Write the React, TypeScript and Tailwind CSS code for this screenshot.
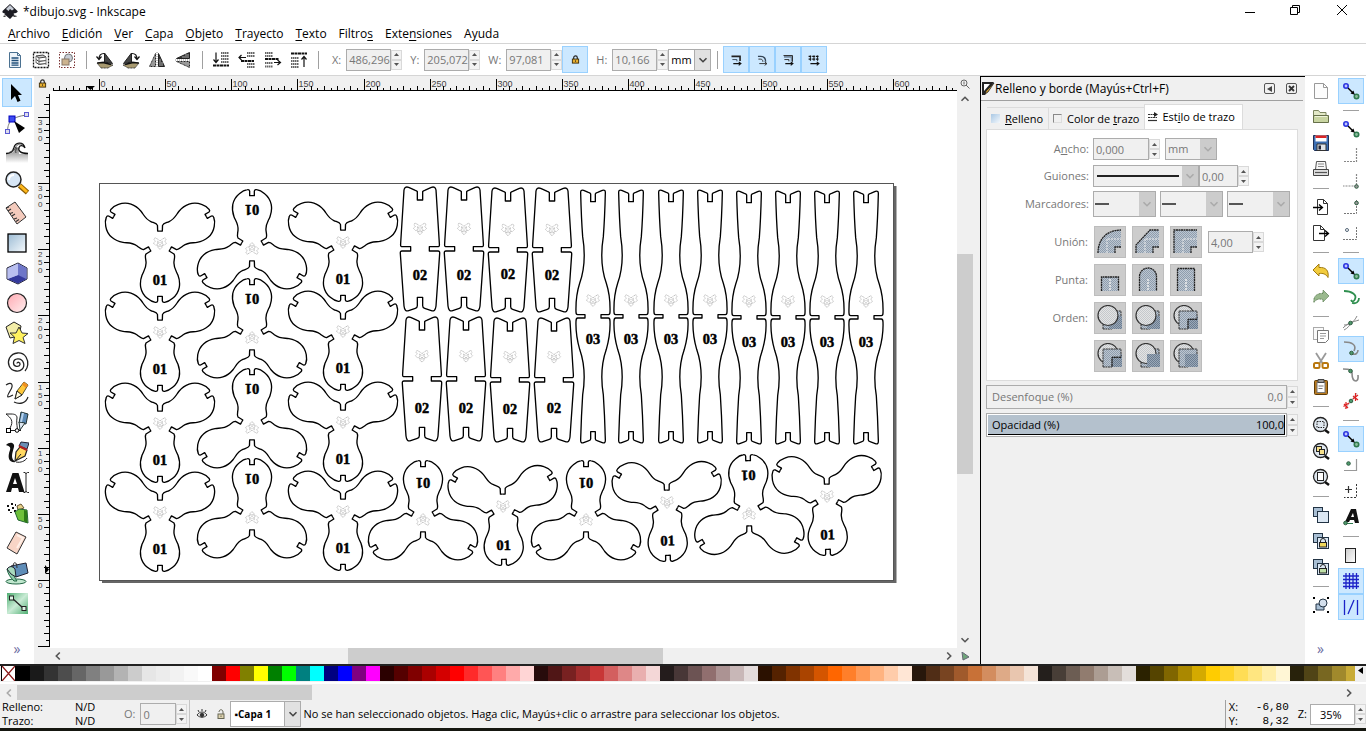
import { type ReactNode } from 'react';

type Glyph = () => ReactNode;

interface IconItem {
  label: string;
  icon: Glyph;
  active?: boolean;
}

const SEP = 'sep' as const;

function Svg({ size = 20, children }: { size?: number; children: ReactNode }) {
  return (
    <svg width={size} height={size} viewBox="0 0 20 20" fill="none" className="block shrink-0" aria-hidden="true">
      {children}
    </svg>
  );
}

/* ---------- shared glyphs ---------- */

const Up = () => (
  <svg width="5" height="3" viewBox="0 0 5 3"><path d="M2.5 0L5 3H0z" fill="currentColor" /></svg>
);
const Down = () => (
  <svg width="5" height="3" viewBox="0 0 5 3"><path d="M2.5 3L5 0H0z" fill="currentColor" /></svg>
);
const Chevron = ({ rotate = 0 }: { rotate?: number }) => (
  <svg width="10" height="10" viewBox="0 0 10 10" fill="none">
    <path d="M1.5 3.2L5 6.7 8.500 3.2" stroke="currentColor" strokeWidth="1.6" transform={`rotate(${rotate} 5 5)`} />
  </svg>
);
const Padlock = ({ size = 9 }: { size?: number }) => (
  <svg width={size} height={size} viewBox="0 0 10 10" fill="none">
    <path d="M3 5V3a2 2 0 0 1 4 0v2" stroke="#222" strokeWidth="1.3" />
    <rect x="1.500" y="4.500" width="7" height="4.500" fill="#e8b030" stroke="#3a2a08" />
    <path d="M5 6v1.500" stroke="#222" />
  </svg>
);

/* ---------- selector toolbar ---------- */

const SelectAll: Glyph = () => (
  <Svg>
    <path d="M4.500 2.500h8l3 3v12h-11z" fill="#eef4fa" stroke="#4b7191" />
    <path d="M12.500 2.500v3h3" stroke="#4b7191" />
    <path d="M6.500 8h7M6.500 10.500h7M6.500 13h7M6.500 15.200h7" stroke="#1f4e79" strokeWidth="1.3" />
  </Svg>
);
const SelectLayers: Glyph = () => (
  <Svg>
    <rect x="2.500" y="2.500" width="15" height="15" stroke="#111" strokeWidth="1.300" strokeDasharray="2 1" />
    <path d="M5 6l7-1 3 2-7 1zM5 9.500l3 2 7-1M5 12.500l3 2 7-1" stroke="#444" fill="#ccc" />
    <path d="M15 7v8M8 8v7M5 6v7" stroke="#777" />
  </Svg>
);
const Deselect: Glyph = () => (
  <Svg>
    <rect x="2.500" y="2.500" width="15" height="15" stroke="#7a3030" strokeDasharray="1.500 1.500" />
    <circle cx="11.500" cy="8" r="4" fill="#c9ced6" stroke="#777" />
    <rect x="5" y="9" width="7" height="6" fill="#cdb48f" stroke="#876" />
  </Svg>
);
const rotateArt = (
  <>
    <path d="M2 13l6-1 10 3-5 3H6z" fill="#a89a70" stroke="#333" strokeDasharray="1 .5" />
    <path d="M9.500 3v9l8 1.500z" fill="#444" stroke="#222" />
    <path d="M2.500 13l5.500-.500 8 2" stroke="#111" strokeWidth="1.300" />
    <path d="M4 9c0-4 2-5.500 5-5.500M1.500 6.500L4 9.500l2.500-3" stroke="#111" strokeWidth="1.200" />
  </>
);
const RotateLeft: Glyph = () => <Svg>{rotateArt}</Svg>;
const RotateRight: Glyph = () => <Svg><g transform="translate(20 0) scale(-1 1)">{rotateArt}</g></Svg>;
const flipArt = (
  <>
    <path d="M8.500 3.500v13h-6z" fill="#999" stroke="#222" strokeDasharray="1 .5" />
    <path d="M11.500 3.500v13h6z" fill="#333" stroke="#222" />
    <path d="M13 9v7M15 12v4" stroke="#aaa" />
    <path d="M10 2v16" stroke="#888" strokeDasharray="1 1" />
  </>
);
const FlipH: Glyph = () => <Svg>{flipArt}</Svg>;
const FlipV: Glyph = () => <Svg><g transform="rotate(-90 10 10)">{flipArt}</g></Svg>;

const LowerBottom: Glyph = () => (
  <Svg>
    <path d="M10 3h8M10 6h8M10 9h8M10 12h8" stroke="#666" strokeWidth="1.800" strokeDasharray="1.500 .5" />
    <path d="M2 15.500h16" stroke="#111" strokeWidth="2" strokeDasharray="3 .5" />
    <path d="M5 2.500V12M2.500 9.500L5 12.500l2.500-3" stroke="#111" strokeWidth="1.200" />
  </Svg>
);
const Lower: Glyph = () => (
  <Svg>
    <path d="M10 3h8M10 6h8M10 14h8M10 17h8" stroke="#666" strokeWidth="1.800" strokeDasharray="1.500 .5" />
    <path d="M4 11h13" stroke="#111" strokeWidth="2" strokeDasharray="3 .5" />
    <path d="M2 7.500h7M4.500 5L2 7.500 4.500 10" stroke="#111" strokeWidth="1.200" />
  </Svg>
);
const Raise: Glyph = () => (
  <Svg>
    <path d="M2 3h8M2 6h8M2 13h8M2 16.500h8" stroke="#666" strokeWidth="1.800" strokeDasharray="1.500 .5" />
    <path d="M2 9h14" stroke="#111" strokeWidth="2" strokeDasharray="3 .5" />
    <path d="M11 12.500h6M14.500 10L17.500 12.500 14.500 15" stroke="#111" strokeWidth="1.200" />
  </Svg>
);
const RaiseTop: Glyph = () => (
  <Svg>
    <path d="M2 8h8M2 11h8M2 14h8M2 17h8" stroke="#666" strokeWidth="1.800" strokeDasharray="1.500 .5" />
    <path d="M2 3.500h16" stroke="#111" strokeWidth="2" strokeDasharray="3 .5" />
    <path d="M15 17V7M12.500 9.500L15 6.500l2.500 3" stroke="#111" strokeWidth="1.200" />
  </Svg>
);

const ScaleStroke: Glyph = () => (
  <Svg size={18}>
    <path d="M5 6h9.500v5" stroke="#222" strokeWidth="1.800" />
    <path d="M6 9.500h5v2" stroke="#345" />
    <path d="M7 14h8M13 12l2.500 2-2.500 2" stroke="#111" strokeWidth="1.200" />
  </Svg>
);
const ScaleCorners: Glyph = () => (
  <Svg size={18}>
    <path d="M5.500 6h3c4 0 5.500 2 5.500 6" stroke="#345" strokeWidth="1.500" />
    <path d="M6 9h2c2 0 3 1 3 3M7 14h8M13 12l2.500 2-2.500 2" stroke="#222" />
  </Svg>
);
const MoveGradients: Glyph = () => (
  <Svg size={18}>
    <path d="M5.500 6.500h8.500v5" stroke="#7389a0" strokeWidth="2" />
    <path d="M5 5h10v7M6 9.500h5v2" stroke="#222" />
    <path d="M7 14h8M13 12l2.500 2-2.500 2" stroke="#111" strokeWidth="1.200" />
  </Svg>
);
const MovePatterns: Glyph = () => (
  <Svg size={18}>
    <path d="M4 6h12M4 9h12" stroke="#111" strokeWidth="1.500" strokeDasharray="3 1" />
    <path d="M6 5v6M10 5v6M14 5v6" stroke="#111" />
    <path d="M6 14h9M13 12l2.500 2-2.500 2" stroke="#111" strokeWidth="1.200" />
  </Svg>
);

const selectorTools: (IconItem | typeof SEP)[] = [
  { label: 'Seleccionar todo', icon: SelectAll },
  { label: 'Seleccionar todo en todas las capas', icon: SelectLayers },
  { label: 'Deseleccionar', icon: Deselect },
  SEP,
  { label: 'Rotar a la izquierda', icon: RotateLeft },
  { label: 'Rotar a la derecha', icon: RotateRight },
  { label: 'Reflejo horizontal', icon: FlipH },
  { label: 'Reflejo vertical', icon: FlipV },
  SEP,
  { label: 'Bajar al fondo', icon: LowerBottom },
  { label: 'Bajar', icon: Lower },
  { label: 'Elevar', icon: Raise },
  { label: 'Traer al frente', icon: RaiseTop },
  SEP,
];

const affectTools: IconItem[] = [
  { label: 'Escalar ancho de trazo', icon: ScaleStroke },
  { label: 'Escalar esquinas', icon: ScaleCorners },
  { label: 'Mover degradados', icon: MoveGradients },
  { label: 'Mover patrones', icon: MovePatterns },
];

/* ---------- toolbox (24px art) ---------- */

function Tool({ children }: { children: ReactNode }) {
  return (
    <svg width="24" height="24" viewBox="0 0 24 24" fill="none" className="block" aria-hidden="true">
      <defs>
        <linearGradient id="blue" x1="0" y1="0" x2="1" y2="1">
          <stop stopColor="#9cbbd4" /><stop offset="1" stopColor="#f6fafd" />
        </linearGradient>
        <linearGradient id="pink" x1="0" y1="0" x2="1" y2="1">
          <stop stopColor="#ffa9b2" /><stop offset="1" stopColor="#fff0f0" />
        </linearGradient>
        <linearGradient id="fade" x1="0" y1="0" x2="0" y2="1">
          <stop stopColor="#777" /><stop offset="1" stopColor="#fff" />
        </linearGradient>
        <linearGradient id="green" x1="0" y1="0" x2="1" y2="1">
          <stop stopColor="#4fae72" /><stop offset=".5" stopColor="#c9ebd5" /><stop offset="1" stopColor="#4fae72" />
        </linearGradient>
      </defs>
      {children}
    </svg>
  );
}

const toolbox: IconItem[] = [
  { label: 'Seleccionar', active: true, icon: () => <Tool><path d="M6 3v16l4-4 2.500 6 3-1.300-2.500-5.700H17z" fill="#000" /></Tool> },
  {
    label: 'Nodos',
    icon: () => (
      <Tool>
        <path d="M2.500 20C3 12 5 6 22 4" stroke="#777" />
        <rect x="4" y="5" width="6" height="6" fill="#3c4cf0" stroke="#0000c0" />
        <rect x="19.500" y="1.500" width="4" height="4" fill="#dde" stroke="#5a5ad0" />
        <rect x=".5" y="18.500" width="4" height="4" fill="#dde" stroke="#5a5ad0" />
        <path d="M9 10l11 7-6 5z" fill="#000" />
      </Tool>
    ),
  },
  {
    label: 'Retocar',
    icon: () => (
      <Tool>
        <path d="M1 13c6 0 8-2 9-6 2-2 4-1 4 6h9v9H1z" fill="url(#fade)" />
        <path d="M1 12.500c5 0 7-2 8-6 1-5 9-7 11 .5-2-3-5-3-6-.500-1 3 1 6 9 6" stroke="#111" strokeWidth="1.300" />
        <path d="M4 11.500c4-1 6-3 7-6 2-3 5-3 7-1.500M11 12c-1-2 0-4 1-5" stroke="#444" />
      </Tool>
    ),
  },
  {
    label: 'Zoom',
    icon: () => (
      <Tool>
        <path d="M14.500 14.500l8 7" stroke="#8b5c00" strokeWidth="5" />
        <path d="M15 14.500l7 6.500" stroke="#ffb81c" strokeWidth="3" />
        <circle cx="8.500" cy="8.500" r="7.500" fill="#d7e6f5" stroke="#222" strokeWidth="1.500" />
        <path d="M4 9c0-3 2-5 5-5" stroke="#fff" strokeWidth="2" />
      </Tool>
    ),
  },
  {
    label: 'Medir',
    icon: () => (
      <Tool>
        <path d="M1 7l9-6 11 15-9 7z" fill="#f4cbbd" stroke="#333" />
        <path d="M1 7l3-1M3 10l3-2M5 12.500l3-1M7 15l3-2M9 18l3-1M11 20.500l3-2" stroke="#333" strokeWidth="1.200" />
      </Tool>
    ),
  },
  { label: 'Rectángulo', icon: () => <Tool><rect x="3" y="3" width="18" height="18" fill="url(#blue)" stroke="#000" strokeWidth="1.300" /></Tool> },
  {
    label: 'Caja 3D',
    icon: () => (
      <Tool>
        <path d="M2 7l11-5 9 5v11l-9 5-11-5z" fill="#aab0e8" stroke="#223" />
        <path d="M13 2.500V15l8.500 3V7z" fill="#6e76c8" />
        <path d="M2.500 18L13 14l8.500 4-8.500 4.500z" fill="#34399c" />
        <path d="M2.500 7.500L13 2.500V14L2.500 18z" fill="#b9bff0" />
      </Tool>
    ),
  },
  { label: 'Elipse', icon: () => <Tool><circle cx="12" cy="12" r="9.500" fill="url(#pink)" stroke="#222" strokeWidth="1.200" /></Tool> },
  {
    label: 'Estrella',
    icon: () => (
      <Tool>
        <path d="M1 6l8-5 7 4-2 10-9 2z" fill="#f3eda8" stroke="#222" />
        <path d="M14 6l3 6 6 .500-5 4 2 6-6-3-6 3 1.500-6.500L5 12h6z" fill="#fff15e" stroke="#333" />
      </Tool>
    ),
  },
  {
    label: 'Espiral',
    icon: () => (
      <Tool>
        <path d="M12 12.500c0-2 3.500-1.500 3 1-1 3-6.500 2.500-6.500-1.500 0-5 8-6 10 0 1.500 5-3 9-7.500 8C4 19 2 12 4.500 7 8 1 17 0 21 6c3 5 2 11-1 14" stroke="#222" strokeWidth="1.300" />
      </Tool>
    ),
  },
  {
    label: 'Lápiz',
    icon: () => (
      <Tool>
        <path d="M1 4c6-4 8 0 4 6-4 7-3 7 3 4M9 21c6 3 12 1 14-5" stroke="#222" strokeWidth="1.200" />
        <path d="M10 18l2-8 7-9 4 3-6 10z" fill="#ffc83a" stroke="#553" />
        <path d="M10 18l2-8 5 4z" fill="#fffbe0" stroke="#222" />
        <path d="M19 1l4 3-2 3-4-3.500z" fill="#f09020" />
      </Tool>
    ),
  },
  {
    label: 'Pluma Bézier',
    icon: () => (
      <Tool>
        <path d="M1 3h5c4 0 6 1 6 4-1 6 1 10 0 12M1 3c5 4 8 7 4 14M6 19.500h10" stroke="#222" />
        <rect x="1.500" y="17.500" width="4" height="4" fill="#fff" stroke="#000" />
        <circle cx="12" cy="19.500" r="1.800" fill="#fff" stroke="#000" />
        <path d="M16 1l7 2-2 10-7-1z" fill="#5b89b5" stroke="#233" />
        <path d="M14 11l6 1-5 7z" fill="#dfe8f2" stroke="#233" />
        <path d="M18 2l-2 9" stroke="#b8d4ee" strokeWidth="2" />
      </Tool>
    ),
  },
  {
    label: 'Caligrafía',
    icon: () => (
      <Tool>
        <path d="M1 4c4-4 9-2 8 2-2 7-4 12 2 15-7 1-9-4-6-12 1-3-1-4-4-5z" fill="#111" />
        <path d="M11 21c5 1 9-1 11-4" stroke="#222" />
        <path d="M10 20l1-9 4-5 7 3-2 6z" fill="#ffd860" stroke="#222" strokeWidth="1.200" />
        <path d="M11 19l5-6" stroke="#222" />
        <path d="M14 5l2-4 8 1-2 6z" fill="#6b8fb5" stroke="#223" />
        <path d="M14 5l8 4" stroke="#b02020" strokeWidth="2" />
      </Tool>
    ),
  },
  {
    label: 'Texto',
    icon: () => (
      <Tool>
        <path fillRule="evenodd" d="M1 21L7.500 2h6l6 19h-5.500l-1-4H7l-1 4zM8 13h4L10 7z" fill="#111" />
        <path d="M18.500 1.500h1.500q1 .5 1 1.500v17q0 1-1 1.500h-1.500M24 1.500h-1.500q-1.500 .5-1.500 1.500M24 21.500h-1.500q-1.500-.5-1.500-1.500" stroke="#222" />
      </Tool>
    ),
  },
  {
    label: 'Spray',
    icon: () => (
      <Tool>
        <path d="M2 4h2v2H2zM6 2h2v2H6zM10 3h1v2h-1zM3 8h2v2H3zM7 6h2v2H7zM5 11h2v1H5zM9 9h2v2H9z" fill="#111" />
        <path d="M12 5l4-2 3 4-6 2z" fill="#e7d089" stroke="#653" />
        <path d="M10 11l4-3 8 1 1 13-10-3z" fill="#6ec03a" stroke="#263" />
        <path d="M19 9l3 1v12l-3-2z" fill="#2d7a16" />
      </Tool>
    ),
  },
  { label: 'Borrador', icon: () => <Tool><path d="M11 1l10 5-9 17-10-6z" fill="#f8d5c6" stroke="#333" /><path d="M12 4l6 3-6 10" stroke="#fff0e8" strokeWidth="2" /></Tool> },
  {
    label: 'Cubo de pintura',
    icon: () => (
      <Tool>
        <ellipse cx="11" cy="20.500" rx="10" ry="2.500" fill="#bfe6cd" stroke="#264" />
        <path d="M2 8c1 5 3 8 7 12h3c-3-4-4-7-3-10z" fill="#8ecdaa" stroke="#264" />
        <path d="M6 5l15-3 2 10-12 4z" fill="#5f8db8" stroke="#223" />
        <path d="M2 8q4-5 8 0l1 8-5-3z" fill="#a8dabd" stroke="#223" />
        <path d="M8 6c0-6 4-6 4 1" stroke="#333" />
      </Tool>
    ),
  },
  {
    label: 'Degradado',
    icon: () => (
      <Tool>
        <rect x="2" y="2" width="21" height="21" fill="url(#green)" />
        <path d="M7 7l11 10" stroke="#222" strokeWidth="1.300" />
        <rect x="4.500" y="5" width="4" height="4" fill="#dff3e6" stroke="#222" />
        <rect x="17" y="15.500" width="4" height="4" fill="#dff3e6" stroke="#222" />
      </Tool>
    ),
  },
];

/* ---------- commands bar ---------- */

const ZoomFrame = ({ children }: { children: ReactNode }) => (
  <Svg>
    <path d="M14 15l4 3" stroke="#111" strokeWidth="2.500" />
    <circle cx="9.500" cy="9.500" r="7" fill="#dfe7ef" stroke="#222" strokeWidth="1.300" />
    {children}
  </Svg>
);
const Clones = ({ children }: { children?: ReactNode }) => (
  <Svg>
    <rect x="2.500" y="2.500" width="9" height="9" fill="#a9bfd4" stroke="#234" />
    <rect x="6.500" y="6.500" width="11" height="11" fill="#dbe7f3" stroke="#234" />
    {children}
  </Svg>
);

const commands: (IconItem | typeof SEP)[] = [
  { label: 'Nuevo', icon: () => <Svg><path d="M3.500 2.500h9l4 4v11h-13zM12.500 2.500v4h4" fill="#fcfcfc" stroke="#999" /></Svg> },
  {
    label: 'Abrir',
    icon: () => <Svg><path d="M2.500 15.500v-12h5l1.500 2h6v10z" fill="#e3e9c8" stroke="#7d8660" /><path d="M2.500 15.500v-7h15v7z" fill="#c9d5a2" stroke="#66704a" /><path d="M4 9.500h12" stroke="#eef3da" /></Svg>,
  },
  {
    label: 'Guardar',
    icon: () => <Svg><path d="M2.500 2.500h15v15h-14l-1-1z" fill="#3d6fb3" stroke="#1d2f55" /><path d="M4.500 2.500h11v6h-11z" fill="#fff" /><path d="M4.500 2.500h11v2.500h-11z" fill="#d92525" /><path d="M6 11h9v6.500H6z" fill="#dfe3e8" stroke="#333" /><path d="M7.500 12.500h2.500v4H7.500z" fill="#223" /></Svg>,
  },
  {
    label: 'Imprimir',
    icon: () => <Svg><path d="M5.500 2.500h9l1 8h-11z" fill="#f8f8f8" stroke="#555" /><path d="M7 5h6M7 7.500h6" stroke="#888" /><path d="M2.500 10.500h15v6h-15z" fill="#dedede" stroke="#444" /><path d="M4 13.500h12" stroke="#555" strokeWidth="1.200" /></Svg>,
  },
  SEP,
  { label: 'Importar', icon: () => <Svg><path d="M6.500 2.500h6l4 4v11h-10zM12.500 2.500v4h4" fill="#fff" stroke="#333" /><path d="M2 10.500h9M8 7.500l3.500 3-3.500 3" stroke="#000" strokeWidth="1.300" /></Svg> },
  { label: 'Exportar', icon: () => <Svg><path d="M2.500 2.500h7l4 4v11h-11zM9.500 2.500v4h4" fill="#fff" stroke="#333" /><path d="M8 10.500h9M14 7.500l3.500 3-3.500 3" stroke="#000" strokeWidth="1.300" /></Svg> },
  SEP,
  { label: 'Deshacer', icon: () => <Svg><path d="M2 9l6-6v3.500c7-.500 10 3 9 10-2-3.500-5-4.500-9-4V15z" fill="#f2cc3e" stroke="#a07a10" /></Svg> },
  { label: 'Rehacer', icon: () => <Svg><path d="M18 9l-6-6v3.500c-6-.500-10 3-9 9 2-3.500 5-4 9-3V15z" fill="#9ab98e" stroke="#5d8054" strokeDasharray="1 .5" /></Svg> },
  SEP,
  { label: 'Copiar', icon: () => <Svg><rect x="2.500" y="2.500" width="10" height="12" fill="#fafafa" stroke="#aaa" /><path d="M6.500 5.500h11v9l-3 3h-8z" fill="#fff" stroke="#777" /><path d="M9 8.500h6M9 11h6M9 13.500h4" stroke="#999" /></Svg> },
  { label: 'Cortar', icon: () => <Svg><path d="M5 2l7 11M15 2L8 13" stroke="#999" strokeWidth="1.800" /><rect x="3" y="12" width="5.500" height="5" rx="1.500" stroke="#b9770e" strokeWidth="2" /><rect x="11.500" y="12" width="5.500" height="5" rx="1.500" stroke="#b9770e" strokeWidth="2" /></Svg> },
  { label: 'Pegar', icon: () => <Svg><rect x="3.500" y="3.500" width="13" height="14" rx="1" fill="#b9791c" stroke="#5b3a08" /><rect x="6" y="5.500" width="8" height="10" fill="#fff" stroke="#777" /><path d="M7 2.500h6v3H7z" fill="#999" stroke="#444" /><path d="M7.500 9h5M7.500 11.500h4" stroke="#777" /></Svg> },
  SEP,
  { label: 'Zoom a selección', icon: () => <ZoomFrame><rect x="6" y="6.500" width="7" height="6" stroke="#222" strokeDasharray="1.500 1" /></ZoomFrame> },
  { label: 'Zoom a dibujo', icon: () => <ZoomFrame><rect x="5.500" y="5.500" width="5" height="5" fill="#f6e08a" stroke="#222" /><rect x="8.500" y="8.500" width="5" height="5" fill="#f6e08a" stroke="#222" /></ZoomFrame> },
  { label: 'Zoom a página', icon: () => <ZoomFrame><rect x="6.500" y="5.500" width="6" height="8" fill="#fff" stroke="#222" /></ZoomFrame> },
  SEP,
  { label: 'Duplicar', icon: () => <Clones /> },
  { label: 'Crear clon', icon: () => <Clones><path d="M9.500 12v-2a2.500 2.500 0 0 1 5 0v2" stroke="#222" /><rect x="8.500" y="11.500" width="7" height="4.500" fill="#f0d75a" stroke="#222" /></Clones> },
  { label: 'Desvincular clon', icon: () => <Clones><path d="M9.500 10a2.500 2.500 0 0 1 5 0v2" stroke="#222" /><rect x="8.500" y="11.500" width="7" height="4.500" fill="#bfe0a8" stroke="#222" /></Clones> },
  SEP,
  {
    label: 'Agrupar',
    icon: () => <Svg><path d="M2 2h2v2H2zM16 2h2v2h-2zM2 16h2v2H2zM16 16h2v2h-2z" fill="#000" /><path d="M5 9h8v6H5z" fill="#a9bfd4" stroke="#234" /><circle cx="12" cy="8" r="4" fill="#d3dfec" stroke="#234" /></Svg>,
  },
];

/* ---------- snap bar ---------- */

const SnapMain: Glyph = () => (
  <Svg>
    <circle cx="5" cy="5" r="2.200" fill="#bfc6ff" stroke="#2b35e0" strokeWidth="1.600" />
    <circle cx="15.500" cy="15.500" r="2.200" fill="#8fbf9f" stroke="#2e7a4e" strokeWidth="1.600" />
    <path d="M7 7l5.500 5.500" stroke="#000" strokeWidth="1.400" />
    <path d="M13.800 13.800L9.500 12.500l3-3z" fill="#000" />
  </Svg>
);
const dot = (cx: number, cy: number, fill = '#4f9a6d') => <circle cx={cx} cy={cy} r="1.800" fill={fill} stroke="#2d5c40" />;

const snaps: (IconItem | typeof SEP)[] = [
  { label: 'Activar ajuste', icon: SnapMain, active: true },
  SEP,
  { label: 'Ajustar cajas', icon: SnapMain },
  { label: 'Bordes de caja', icon: () => <Svg><path d="M15.500 3v13.500H2" stroke="#888" strokeDasharray="2 1" strokeWidth="1.200" /></Svg> },
  { label: 'Esquinas de caja', icon: () => <Svg><path d="M15.500 3v12H2" stroke="#888" strokeDasharray="2 1" strokeWidth="1.200" />{dot(15.5, 15.5, '#999')}</Svg> },
  { label: 'Puntos medios de borde', icon: () => <Svg><path d="M15.500 3v13.500H2" stroke="#777" strokeDasharray="2 1" />{dot(15.5, 6, '#999')}</Svg> },
  { label: 'Centros de caja', icon: () => <Svg><path d="M15.500 4v12.500H2" stroke="#777" strokeDasharray="2 1" /><circle cx="6" cy="7" r="1.500" stroke="#567" /></Svg> },
  SEP,
  { label: 'Ajustar nodos', icon: SnapMain, active: true },
  { label: 'Ajustar a trayectos', icon: () => <Svg><path d="M3 4c8 0 13 4 11 8-1 3-3 3-4 1M11 16c4 1 7-1 7-5" stroke="#2f8f4f" strokeWidth="1.800" /></Svg> },
  { label: 'Intersecciones', icon: () => <Svg><path d="M2 15C8 9 12 9 18 7M3 12c6 0 10-3 13-9M3 17c4-2 5-4 8-8" stroke="#888" />{dot(9.5, 10)}</Svg> },
  { label: 'Nodos afilados', active: true, icon: () => <Svg><path d="M3 3c8 0 13 3 10 9M11 15c4 1 6-1 6-4" stroke="#888" strokeWidth="1.600" />{dot(10.5, 14)}</Svg> },
  { label: 'Nodos suaves', icon: () => <Svg><path d="M2 4c7 0 9 1 9 4 0 5 1 8 4 8 3-1 2-4 2-6" stroke="#888" strokeWidth="1.600" />{dot(9.5, 6)}</Svg> },
  { label: 'Puntos medios de línea', icon: () => <Svg><path d="M4 18L16 2" stroke="#bbb" /><path d="M3 13l4 4M2.500 15.500L8 12M5 11l0 7M12 5l5 4M12 8l5-4M14.500 2v8" stroke="#d22" strokeWidth="1.200" />{dot(10, 10)}</Svg> },
  SEP,
  { label: 'Otros puntos', icon: SnapMain, active: true },
  { label: 'Centros de objeto', icon: () => <Svg><path d="M15.500 4v11.500H3" stroke="#999" strokeWidth="1.200" />{dot(7.5, 8.5)}</Svg> },
  { label: 'Centro de rotación', icon: () => <Svg><path d="M15.500 3v13.500H3" stroke="#333" strokeDasharray="2 1.500" /><path d="M7.500 5v7M4 8.500h7" stroke="#333" strokeWidth="1.200" /></Svg> },
  {
    label: 'Línea base de texto',
    icon: () => <Svg><path fillRule="evenodd" d="M4 15L10 2h5l3 14h-4l-1-3H9l-1 2zM10 10h3l-1-4z" fill="#111" /><path d="M4 16.500h8" stroke="#2e7a4e" />{dot(4.5, 16)}</Svg>,
  },
  SEP,
  {
    label: 'Borde de página',
    icon: () => (
      <Svg>
        <defs><linearGradient id="pageGrey" x1="0" y1="0" x2="1" y2="1"><stop stopColor="#ccc" /><stop offset="1" stopColor="#fff" /></linearGradient></defs>
        <rect x="4.500" y="3.500" width="10" height="14" fill="url(#pageGrey)" stroke="#222" />
      </Svg>
    ),
  },
  { label: 'Rejillas', active: true, icon: () => <Svg><path d="M5 2v16M8.500 2v16M12 2v16M15.500 2v16M2 5h16M2 8.500h16M2 12h16M2 15.500h16" stroke="#1c22c8" strokeWidth="1.300" /></Svg> },
  { label: 'Guías', active: true, icon: () => <Svg><path d="M3.500 3v15M16.500 3v15M7 17l6-14" stroke="#1c22c8" strokeWidth="1.300" /></Svg> },
];

/* ---------- palette ---------- */

const palette = [
  'bg-[#000000]', 'bg-[#1a1a1a]', 'bg-[#333333]', 'bg-[#4d4d4d]', 'bg-[#666666]', 'bg-[#808080]', 'bg-[#999999]',
  'bg-[#b3b3b3]', 'bg-[#cccccc]', 'bg-[#e6e6e6]', 'bg-[#ececec]', 'bg-[#f2f2f2]', 'bg-[#f9f9f9]', 'bg-[#ffffff]',
  'bg-[#800000]', 'bg-[#ff0000]', 'bg-[#808000]', 'bg-[#ffff00]', 'bg-[#008000]', 'bg-[#00ff00]',
  'bg-[#008080]', 'bg-[#00ffff]', 'bg-[#000080]', 'bg-[#0000ff]', 'bg-[#800080]', 'bg-[#ff00ff]',
  'bg-[#2b0000]', 'bg-[#550000]', 'bg-[#800000]', 'bg-[#aa0000]', 'bg-[#d40000]', 'bg-[#ff0000]',
  'bg-[#ff2a2a]', 'bg-[#ff5555]', 'bg-[#ff8080]', 'bg-[#ffaaaa]', 'bg-[#ffd5d5]',
  'bg-[#280b0b]', 'bg-[#501616]', 'bg-[#782121]', 'bg-[#a02c2c]', 'bg-[#c83737]', 'bg-[#d35f5f]',
  'bg-[#de8787]', 'bg-[#e9afaf]', 'bg-[#f4d7d7]',
  'bg-[#241c1c]', 'bg-[#483737]', 'bg-[#6c5353]', 'bg-[#916f6f]', 'bg-[#ac9393]', 'bg-[#c8b7b7]', 'bg-[#e3dbdb]',
  'bg-[#2b1100]', 'bg-[#552200]', 'bg-[#803300]', 'bg-[#aa4400]', 'bg-[#d45500]', 'bg-[#ff6600]',
  'bg-[#ff7f2a]', 'bg-[#ff9955]', 'bg-[#ffb380]', 'bg-[#ffccaa]', 'bg-[#ffe6d5]',
  'bg-[#28170b]', 'bg-[#502d16]', 'bg-[#784421]', 'bg-[#a05a2c]', 'bg-[#c87137]', 'bg-[#d38d5f]',
  'bg-[#deaa87]', 'bg-[#e9c6af]', 'bg-[#f4e3d7]',
  'bg-[#241f1c]', 'bg-[#483e37]', 'bg-[#6c5d53]', 'bg-[#917c6f]', 'bg-[#ac9d93]', 'bg-[#c8beb7]', 'bg-[#e3dedb]',
  'bg-[#2b2200]', 'bg-[#554400]', 'bg-[#806600]', 'bg-[#aa8800]', 'bg-[#d4aa00]', 'bg-[#ffcc00]',
  'bg-[#ffd42a]', 'bg-[#ffdd55]', 'bg-[#ffe680]', 'bg-[#ffeeaa]', 'bg-[#fff6d5]',
  'bg-[#28220b]', 'bg-[#504416]', 'bg-[#786721]', 'bg-[#a0892c]', 'bg-[#c8ab37]',
];

/* ---------- drawing on the canvas ---------- */

// Half outlines around a vertical axis, in thirds of a pixel
const LOBE = 'M31 18L27.500 24 42 33C46 38 43 46 42 56C40 74 49 84 54 97C63 121 60 148 38 166C31 172 23 177 14 178Q8 179 7 174V160H0';
const PIECE_02 = 'M0 60H8V35Q9 33 14 31L34 22Q46 18 48 30L58 190Q59 200 55 200H28V213H54Q60 213 59 221L48 378Q46 396 34 392L14 385Q8 383 8 377V352H0';
const PIECE_03 = 'M0 65H7V42Q8 38 14 37L28 31Q38 28 37 40C36 80 34 130 31 170C22 225 26 270 40 310C48 335 52 365 51 396Q51 404 46 404H24V414H46Q51 414 51 424C52 450 48 480 40 508C26 548 22 590 31 645C34 690 36 740 37 778Q38 792 28 788L14 783Q7 781 7 777V755H0';
const FACE = 'M0-6L6-11 15-16 18-10 14-5 20 0 13 7 8 5 6 14 0 19-6 14-8 5-13 7-20 0-14-5-18-10-15-16-6-11zM-7-5l5 4-5 4zM7-5l-5 4 5 4zM0 4l5 6h-10z';

function Mirrored({ d }: { d: string }) {
  return (
    <>
      <path d={d} />
      <path d={d} transform="scale(-1 1)" />
    </>
  );
}

function Emblem({ y = 0 }: { y?: number }) {
  return <path d={FACE} transform={`translate(0 ${y})`} stroke="#999" strokeWidth="1.800" strokeDasharray="4 1.500" />;
}

function Label({ y, children }: { y: number; children: string }) {
  return (
    <text y={y} textAnchor="middle" fill="#000" stroke="#000" strokeWidth="1.500" fontSize="43" fontWeight="700" className="font-['Liberation_Serif',serif]">
      {children}
    </text>
  );
}

interface TrefoilProps {
  x: number;
  y: number;
  turn: number;
  labelY: number;
}

function Trefoil({ x, y, turn, labelY }: TrefoilProps) {
  return (
    <g transform={`translate(${x} ${y}) rotate(${turn}) scale(.3333)`}>
      {[0, 120, 240].map(a => (
        <g key={a} transform={`rotate(${a})`}>
          <Mirrored d={LOBE} />
        </g>
      ))}
      <Emblem />
      <Label y={labelY}>01</Label>
    </g>
  );
}

// x, y, rotation, label baseline
const trefoils = [
  [160, 243, 0, 126], [160, 332, 0, 126], [160, 423, 0, 125], [160, 512, 0, 125],
  [252, 249, 180, 133], [252, 338, 180, 133], [252, 428, 180, 133], [252, 518, 180, 133],
  [343, 242, 0, 127], [343, 331, 0, 127], [343, 422, 0, 126], [343, 511, 0, 126],
  [423, 520, 180, 127], [503, 506, -1, 132], [586, 520, 180, 127], [667, 502, -1, 130], [749, 514, 179, 130], [827, 496, -1, 130],
];
// x, y, emblem, label
const pieces02 = [
  [420, 180, 145, 300], [464, 180, 145, 300], [508, 181, 145, 295], [552, 181, 145, 298],
  [422, 310, 137, 310], [466, 310, 137, 310], [510, 311, 137, 310], [554, 311, 137, 307],
];
const pieces03 = [593, 631, 671, 710, 749, 788, 827, 866];

function Canvas() {
  return (
    <svg className="block h-full w-full bg-white" role="img" aria-label="Lienzo">
      <g transform="translate(-50 -91)" fill="none">
        <path d="M895 186v395.500H102" stroke="#666" strokeWidth="3" />
        <rect x="99.5" y="183.5" width="794" height="397" fill="#fff" stroke="#555" />
        <g stroke="#000" strokeWidth="4" strokeLinejoin="round">
          {trefoils.map(([x, y, turn, labelY]) => <Trefoil key={`${x}-${y}`} x={x} y={y} turn={turn} labelY={labelY} />)}
          {pieces02.map(([x, y, emblemY, labelY]) => (
            <g key={`${x}-${y}`} transform={`translate(${x} ${y}) scale(.3333)`}>
              <Mirrored d={PIECE_02} />
              <Emblem y={emblemY} />
              <Label y={labelY}>02</Label>
            </g>
          ))}
          {pieces03.map((x, i) => (
            <g key={x} transform={`translate(${x} ${i > 3 ? 181 : 180}) scale(.3333)`}>
              <Mirrored d={PIECE_03} />
              <Emblem y={360} />
              <Label y={i > 3 ? 498 : 493}>03</Label>
            </g>
          ))}
        </g>
      </g>
    </svg>
  );
}

/* ---------- rulers ---------- */

const STEP = 6.615;

function TopRuler() {
  const ticks = Array.from({ length: 137 }, (_, i) => i - 7);
  return (
    <svg className="block h-[15px] w-full bg-[#f0f0f0] font-['Liberation_Sans',sans-serif]" aria-hidden="true">
      <path d="M3 14.500h3000" stroke="#000" />
      {ticks.map(i => {
        const x = Math.round(49 + i * STEP) + 0.5;
        const major = i % 10 === 0;
        return (
          <g key={i}>
            <path d={`M${x} 15V${major ? 3 : i % 2 ? 12 : 10}`} stroke="#000" />
            {major && <text x={x + 1} y="11" fontSize="9" fill="#444">{i * 5}</text>}
          </g>
        );
      })}
      <path d="M36 10h9l-4.500 4z" fill="#000" />
    </svg>
  );
}

function SideRuler() {
  const ticks = Array.from({ length: 84 }, (_, i) => 73 - i);
  return (
    <svg className="block h-full w-[16px] bg-[#f0f0f0] font-['Liberation_Sans',sans-serif]" aria-hidden="true">
      <path d="M15.500 3v553" stroke="#000" />
      {ticks.map(i => {
        const y = Math.round(489 - i * STEP) + 0.5;
        const major = i % 10 === 0;
        return (
          <g key={i}>
            <path d={`M16 ${y}H${major ? 4 : i % 2 ? 12 : 10}`} stroke="#000" />
            {major && i >= 0 && String(i * 5).split('').map((c, k) => (
              <text key={k} x="4" y={y + 7 + k * 8} fontSize="8" fill="#444">{c}</text>
            ))}
          </g>
        );
      })}
      <path d="M11 474v9l4-4.500z" fill="#000" />
    </svg>
  );
}

/* ---------- form parts ---------- */

function Steppers({ tall }: { tall?: boolean }) {
  const cell = `flex w-[11px] items-center justify-center border border-[#d9d9d9] bg-[#f3f3f3] text-[#555] ${tall ? 'h-[11px]' : 'h-[10px]'}`;
  return (
    <span className="flex shrink-0 flex-col">
      <button type="button" aria-label="Aumentar" className={cell}><Up /></button>
      <button type="button" aria-label="Reducir" className={cell}><Down /></button>
    </span>
  );
}

interface SpinProps {
  label: string;
  value: string;
  width: string;
  hidden?: boolean;
}

function Spin({ label, value, width, hidden }: SpinProps) {
  return (
    <span className="flex items-center">
      <label className="flex items-center">
        <span className={hidden ? 'sr-only' : 'mr-[5px] text-[#777]'}>{label}</span>
        <input
          defaultValue={value}
          disabled
          className={`h-[22px] border border-[#acacac] bg-[#f0f0f0] pl-[2px] text-[#777] outline-none ${width}`}
        />
      </label>
      <Steppers />
    </span>
  );
}

function Combo({ label, value, width, off }: { label: string; value: string; width: string; off?: boolean }) {
  return (
    <label className={`flex h-[22px] items-stretch border border-[#acacac] ${off ? 'bg-[#f0f0f0] text-[#777]' : 'bg-white text-black'} ${width}`}>
      <span className="sr-only">{label}</span>
      <select disabled={off} className="min-w-0 flex-1 appearance-none pl-[2px] outline-none">
        <option>{value}</option>
      </select>
      <span className={`flex w-[16px] shrink-0 items-center justify-center ${off ? 'bg-[#ccc] text-[#aaa]' : 'border-l border-[#acacac] bg-[#e1e1e1] text-[#444]'}`}>
        <Chevron />
      </span>
    </label>
  );
}

function Column({ items }: { items: (IconItem | typeof SEP)[] }) {
  return (
    <>
      {items.map((item, i) =>
        item === SEP ? (
          <div key={i} className="flex h-3 items-center justify-center"><div className="h-px w-4 bg-[#a0a0a0]" /></div>
        ) : (
          <button
            key={item.label}
            type="button"
            aria-label={item.label}
            className={`flex h-[26px] w-[26px] items-center justify-center ${item.active ? 'border border-[#99d1ff] bg-[#cce8ff]' : ''}`}
          >
            <item.icon />
          </button>
        )
      )}
    </>
  );
}

/* ---------- window sections ---------- */

function TitleBar() {
  return (
    <header className="flex h-6 shrink-0 items-center">
      <svg width="16" height="16" viewBox="0 0 16 16" className="ml-[2px] mr-[5px]" aria-hidden="true">
        <path d="M8 0l7.500 7c1 2-3 2-4 3l1.500 1.500-2 .5-3 3-3-2.500-1-1L2 11l1.500-1L.500 8.500V7z" fill="#1b1b22" />
        <path d="M8 1l4 4-2 1.500L8 5 6.500 7 4 5z" fill="#c6ccd6" />
        <path d="M11 12l3-.5 1 1-3 .5zM1 12l2-.5 1 1-2 .5z" fill="#333" />
      </svg>
      <h1 className="flex-1 text-xs">*dibujo.svg - Inkscape</h1>
      <button type="button" aria-label="Minimizar" className="flex h-full w-[46px] items-center justify-center">
        <svg width="10" height="10"><path d="M0 5.500h10" stroke="#000" /></svg>
      </button>
      <button type="button" aria-label="Restaurar" className="flex h-full w-[44px] items-center justify-center pb-1">
        <svg width="10" height="10" fill="none" stroke="#000"><path d="M.5 2.500h7v7h-7zM2.500 2.500v-2h7v7h-2" /></svg>
      </button>
      <button type="button" aria-label="Cerrar" className="flex h-full w-[49px] items-center justify-center pb-1">
        <svg width="10" height="10" stroke="#000"><path d="M0 0l10 10M10 0L0 10" /></svg>
      </button>
    </header>
  );
}

const menus: [string, string, string][] = [
  ['', 'A', 'rchivo'], ['', 'E', 'dición'], ['', 'V', 'er'], ['', 'C', 'apa'], ['', 'O', 'bjeto'],
  ['', 'T', 'rayecto'], ['', 'T', 'exto'], ['Filtro', 's', ''], ['Exte', 'n', 'siones'], ['A', 'y', 'uda'],
];

function MenuBar() {
  return (
    <nav className="flex h-5 shrink-0 items-center gap-3 border-b border-[#d5d5d5] pl-2 text-xs">
      {menus.map(([before, key, after]) => (
        <button key={before + key + after} type="button">
          {before}<span className="underline underline-offset-2">{key}</span>{after}
        </button>
      ))}
    </nav>
  );
}

function SelectorBar() {
  return (
    <div className="flex h-8 shrink-0 items-center border-b border-[#d5d5d5] pl-[2px]">
      {selectorTools.map((item, i) =>
        item === SEP ? (
          <div key={i} className="flex w-3 justify-center"><div className="h-[18px] w-px bg-[#a0a0a0]" /></div>
        ) : (
          <button key={item.label} type="button" aria-label={item.label} className="flex h-[26px] w-[26px] items-center justify-center">
            <item.icon />
          </button>
        )
      )}
      <div className="ml-2 flex items-center gap-[8px]">
        <Spin label="X:" value="486,296" width="w-[45px]" />
        <Spin label="Y:" value="205,072" width="w-[45px]" />
        <Spin label="W:" value="97,081" width="w-[45px]" />
      </div>
      <button type="button" aria-label="Bloquear proporción" className="mr-[8px] flex h-[27px] w-[26px] items-center justify-center border border-[#99d1ff] bg-[#cce8ff]">
        <Padlock />
      </button>
      <Spin label="H:" value="10,166" width="w-[45px]" />
      <Combo label="Unidad" value="mm" width="w-[43px]" />
      <div className="flex w-3 justify-center"><div className="h-[18px] w-px bg-[#a0a0a0]" /></div>
      {affectTools.map(({ label, icon: Icon }) => (
        <button key={label} type="button" aria-label={label} className="flex h-[27px] w-[26px] items-center justify-center border border-[#99d1ff] bg-[#cce8ff]">
          <Icon />
        </button>
      ))}
    </div>
  );
}

function Workspace() {
  return (
    <section className="grid min-w-0 flex-1 grid-cols-[16px_minmax(0,1fr)_16px] grid-rows-[15px_minmax(0,1fr)_16px] bg-[#f0f0f0]">
      <div className="flex items-center justify-center"><Padlock /></div>
      <TopRuler />
      <button type="button" aria-label="Zoom al cambiar tamaño" className="flex items-center justify-center">
        <svg width="10" height="10" viewBox="0 0 10 10" fill="none" stroke="#666"><circle cx="4" cy="4" r="3" /><path d="M6 6l3.500 3.500M4 2.500v3" /></svg>
      </button>

      <SideRuler />
      <Canvas />
      <div className="flex flex-col">
        <button type="button" aria-label="Subir" className="flex h-[16px] items-center justify-center text-[#555]"><Chevron rotate={180} /></button>
        <div className="grow-[147]" />
        <div className="grow-[220] bg-[#cdcdcd]" />
        <div className="grow-[158]" />
        <button type="button" aria-label="Bajar" className="flex h-[16px] items-center justify-center text-[#555]"><Chevron /></button>
      </div>

      <div />
      <div className="flex">
        <button type="button" aria-label="Izquierda" className="flex w-[16px] items-center justify-center text-[#555]"><Chevron rotate={90} /></button>
        <div className="grow-[282]" />
        <div className="grow-[314] bg-[#cdcdcd]" />
        <div className="grow-[278]" />
        <button type="button" aria-label="Derecha" className="flex w-[16px] items-center justify-center text-[#555]"><Chevron rotate={-90} /></button>
      </div>
      <div className="flex items-center justify-center">
        <svg width="9" height="9" viewBox="0 0 9 9"><path d="M1 0l7 5-6 3z" fill="#6fa67a" stroke="#667" /></svg>
      </div>
    </section>
  );
}

/* stroke style buttons, 26px art */

function StyleButton({ label, children }: { label: string; children: ReactNode }) {
  return (
    <button type="button" disabled aria-label={label} className="flex h-8 w-8 items-center justify-center border border-[#bdbdbd] bg-[#cccccc]">
      <svg width="26" height="26" viewBox="0 0 26 26" fill="none">
        <defs>
          <pattern id="dither" width="2" height="2" patternUnits="userSpaceOnUse">
            <rect width="2" height="2" fill="#bcc6d1" /><path d="M0 0h1v1H0zM1 1h1v1H1z" fill="#8f9dad" />
          </pattern>
          <pattern id="ditherDark" width="2" height="2" patternUnits="userSpaceOnUse">
            <rect width="2" height="2" fill="#9aa8b8" /><path d="M0 0h1v1H0zM1 1h1v1H1z" fill="#6c7d90" />
          </pattern>
          <pattern id="ditherLight" width="2" height="2" patternUnits="userSpaceOnUse">
            <rect width="2" height="2" fill="#e4e4e4" /><path d="M0 0h1v1H0zM1 1h1v1H1z" fill="#c4c8cc" />
          </pattern>
        </defs>
        {children}
      </svg>
    </button>
  );
}

const joins = [
  { label: 'Unión redondeada', d: 'M1 24C1 10 10 1 24 1' },
  { label: 'Unión en bisel', d: 'M1 24V16L15 1H24' },
  { label: 'Unión en inglete', d: 'M1 24V1H24' },
];
const caps = [
  { label: 'Punta recta', d: 'M4.500 24V10H21.500V24' },
  { label: 'Punta redondeada', d: 'M4.500 24V9.500a8.500 8.500 0 0 1 17 0V24' },
  { label: 'Punta cuadrada', d: 'M4.500 24V1.500H21.500V24' },
];
const orders = ['Relleno, trazo, marcadores', 'Trazo, relleno, marcadores', 'Relleno, marcadores, trazo', 'Marcadores, relleno, trazo', 'Trazo, marcadores, relleno', 'Marcadores, trazo, relleno'];

function OrderArt({ kind }: { kind: number }) {
  const marker = <circle cx="11" cy="10.500" r="10" fill="url(#ditherLight)" stroke="#333" strokeWidth="1.200" />;
  const stroke = <path d="M6 24V6h18v8H15v10z" fill="url(#dither)" stroke="#333" strokeDasharray="2 .6" />;
  const fill = <path d="M12 11h13v13H12z" fill="url(#ditherDark)" />;
  const corner = <path d="M24 14.500H15V24" stroke="#222" strokeDasharray="2 .6" />;
  const layers = [
    [stroke, fill, marker], [stroke, fill, marker, corner].slice(0, 3), [marker, fill, stroke, corner],
    [marker, fill, stroke, corner], [stroke, marker, fill], [marker, stroke, fill],
  ][kind];
  return (
    <>
      {layers.map((layer, i) => <g key={i}>{layer}</g>)}
    </>
  );
}

function FillStrokeDock() {
  const rowLabel = 'w-[106px] shrink-0 pr-1 text-right text-[#777]';
  const artLabel = 'w-[101px] shrink-0 text-right text-[#777]';
  return (
    <aside className="flex w-[325px] shrink-0 flex-col border-l border-t border-black bg-[#f0f0f0]">
      <div className="mr-[2px] flex h-6 items-center border-b border-[#a0a0a0]">
        <svg width="14" height="13" viewBox="0 0 14 13"><path d="M1 0h12L4 13H1z" fill="#222" /><path d="M3 2h6l-6 7z" fill="#fff" /><path d="M13 1l-6 9-3 2 1-3z" fill="#c9982c" stroke="#222" strokeWidth=".8" /></svg>
        <h2 className="flex-1 text-xs">Relleno y borde (Mayús+Ctrl+F)</h2>
        <button type="button" aria-label="Iconificar" className="mr-[11px] flex h-[11px] w-[11px] items-center justify-center rounded-[2px] border border-[#555] text-[#444]">
          <svg width="5" height="6"><path d="M5 0v6L0 3z" fill="currentColor" /></svg>
        </button>
        <button type="button" aria-label="Cerrar panel" className="mr-[6px] flex h-[11px] w-[11px] items-center justify-center rounded-[2px] border border-[#555] text-[#333]">
          <svg width="7" height="7" stroke="currentColor" strokeWidth="1.800"><path d="M1 1l5 5M6 1L1 6" /></svg>
        </button>
      </div>

      <div className="ml-[6px] mr-[7px] mt-[3px] flex items-end" role="tablist">
        <button type="button" role="tab" className="flex h-[22px] items-center border-r border-t border-[#dcdcdc] pl-[4px] pr-[5px]">
          <span className="mr-[5px] h-[9px] w-[9px] bg-linear-to-br from-[#a9c8e4] to-[#f4f8fc]" />
          <span><span className="underline">R</span>elleno</span>
        </button>
        <button type="button" role="tab" className="flex h-[22px] items-center border-t border-[#dcdcdc] pl-[4px] pr-[5px]">
          <span className="mr-[5px] h-[9px] w-[9px] border border-[#888] border-b-[#ddd] border-r-[#ddd]" />
          <span>Color de <span className="underline">t</span>razo</span>
        </button>
        <button type="button" role="tab" aria-selected className="flex h-[25px] items-center border border-b-0 border-[#dcdcdc] bg-white pl-[3px] pr-[7px]">
          <svg width="10" height="10" viewBox="0 0 10 10" className="mr-[4px]" stroke="#333"><path d="M0 2.500h7M0 5.500h9" strokeDasharray="2 .5" /><path d="M0 8.500h9" strokeWidth="1.200" /><path d="M6 0l4 2.500L6 5z" fill="#222" stroke="none" /></svg>
          <span>Est<span className="underline">i</span>lo de trazo</span>
        </button>
      </div>

      <div className="ml-[5px] mr-[7px] flex flex-col border border-[#dcdcdc] bg-white pb-[8px] pt-[7px]">
        <div className="flex h-[24px] items-center">
          <span className={rowLabel}>A<span className="underline">n</span>cho:</span>
          <Spin label="Ancho" hidden value="0,000" width="w-[56px]" />
          <div className="ml-[5px]"><Combo label="Unidad de ancho" value="mm" width="w-[52px]" off /></div>
        </div>
        <div className="mt-[3px] flex h-[24px] items-center">
          <span className={rowLabel}>Guiones:</span>
          <button type="button" disabled aria-label="Guiones" className="flex h-[22px] w-[106px] items-stretch border border-[#acacac] bg-[#f0f0f0]">
            <span className="mx-[3px] h-[2px] flex-1 self-center bg-[#222]" />
            <span className="flex w-[16px] items-center justify-center bg-[#ccc] text-[#aaa]"><Chevron /></span>
          </button>
          <Spin label="Desplazamiento" hidden value="0,00" width="w-[39px]" />
        </div>
        <div className="mt-[2px] flex h-[28px] items-center">
          <span className={rowLabel}>Marcadores:</span>
          <div className="flex gap-[4px]">
            {['inicial', 'medio', 'final'].map(pos => (
              <button key={pos} type="button" disabled aria-label={`Marcador ${pos}`} className="flex h-[26px] w-[63px] items-stretch border border-[#acacac] bg-[#f0f0f0]">
                <span className="ml-px h-[2px] w-[14px] self-center bg-[#555]" />
                <span className="ml-auto flex w-[16px] items-center justify-center bg-[#ccc] text-[#aaa]"><Chevron /></span>
              </button>
            ))}
          </div>
        </div>
        <div className="mt-[8px] flex flex-col gap-[6px]">
          <div className="flex h-8 items-center gap-[6px]">
            <span className={artLabel}>Unión:</span>
            {joins.map(j => (
              <StyleButton key={j.label} label={j.label}>
                <path d={`${j.d}V18H18V24z`} fill="url(#dither)" />
                <path d={`${j.d}M24 18H18V24`} stroke="#222" strokeWidth="1.300" strokeDasharray="2 .5" />
                <path d="M10 24V10H24" stroke="#eee" strokeDasharray="2 1" />
              </StyleButton>
            ))}
            <Spin label="Límite de inglete" hidden value="4,00" width="w-[45px]" />
          </div>
          <div className="flex h-8 items-center gap-[6px]">
            <span className={artLabel}>Punta:</span>
            {caps.map(c => (
              <StyleButton key={c.label} label={c.label}>
                <path d={c.d} fill="url(#dither)" stroke="#222" strokeWidth="1.300" strokeDasharray="2 .5" />
                <path d="M13 12v12" stroke="#eee" strokeWidth="1.500" strokeDasharray="2 1" />
              </StyleButton>
            ))}
          </div>
          {[0, 3].map(start => (
            <div key={start} className="flex h-8 items-center gap-[6px]">
              <span className={artLabel}>{start === 0 ? 'Orden:' : ''}</span>
              {orders.slice(start, start + 3).map((label, i) => (
                <StyleButton key={label} label={label}><OrderArt kind={start + i} /></StyleButton>
              ))}
            </div>
          ))}
        </div>
      </div>

      <div className="ml-[5px] mr-[7px] mt-[4px] flex items-center">
        <label className="flex h-[24px] flex-1 items-center border border-[#acacac] bg-[#f0f0f0] pl-[5px] pr-[3px] text-[#777]">
          Desenfoque (%)
          <input defaultValue="0,0" disabled className="ml-auto w-[60px] text-right" />
        </label>
        <Steppers tall />
      </div>
      <div className="ml-[5px] mr-[7px] mt-[4px] flex items-center">
        <label className="flex h-[24px] flex-1 items-center border border-[#acacac] bg-white p-px">
          <span className="flex h-full flex-1 items-center border-b border-r border-black bg-[#b4c1cd] pl-[4px]">
            Opacidad (%)
            <input defaultValue="100,0" className="ml-auto w-[60px] bg-transparent text-right outline-none" />
          </span>
        </label>
        <Steppers tall />
      </div>
    </aside>
  );
}

function StatusBar() {
  return (
    <footer className="flex h-[28px] shrink-0 items-center bg-[#f0f0f0]">
      <dl className="ml-[2px] grid w-[122px] grid-cols-[73px_1fr] leading-[14px]">
        <dt>Relleno:</dt><dd>N/D</dd>
        <dt>Trazo:</dt><dd>N/D</dd>
      </dl>
      <Spin label="O:" value="0" width="w-[36px]" />
      <div className="ml-[2px] h-full w-px bg-[#c4c4c4]" />
      <button type="button" aria-label="Visibilidad de capa" className="ml-[6px] flex w-[12px] justify-center">
        <svg width="12" height="10" viewBox="0 0 12 10" fill="none" stroke="#333"><path d="M1 6c3-4 7-4 10 0-3 3-7 3-10 0z" /><circle cx="6" cy="6" r="1.800" fill="#333" /><path d="M3 3L2 1M6 2V0M9 3l1-2" /></svg>
      </button>
      <button type="button" aria-label="Bloqueo de capa" className="ml-[8px] mr-[4px] flex w-[10px] justify-center">
        <svg width="8" height="10" viewBox="0 0 8 10" fill="none" stroke="#665"><path d="M2 3c0-3 4-3 4 0v2" /><rect x="1" y="5" width="6" height="4.500" fill="#ddd2ae" /><path d="M4 6.500v1.500" /></svg>
      </button>
      <label className="flex h-[26px] w-[71px] items-stretch border border-[#acacac] bg-white">
        <span className="sr-only">Capa</span>
        <select className="min-w-0 flex-1 appearance-none pl-[3px] text-[10px] font-bold outline-none">
          <option>▪Capa 1</option>
        </select>
        <span className="flex w-[16px] shrink-0 items-center justify-center border-l border-[#acacac] bg-[#e1e1e1] text-[#444]"><Chevron /></span>
      </label>
      <p className="ml-[2px] flex-1 truncate">No se han seleccionado objetos. Haga clic, Mayús+clic o arrastre para seleccionar los objetos.</p>
      <div className="h-full w-px bg-[#a0a0a0]" />
      <dl className="ml-[3px] grid grid-cols-[10px_50px] leading-[14px]">
        <dt>X:</dt><dd className="text-right font-['Liberation_Mono',monospace] text-[11px]">-6,80</dd>
        <dt>Y:</dt><dd className="text-right font-['Liberation_Mono',monospace] text-[11px]">8,32</dd>
      </dl>
      <label className="ml-[9px] flex items-center">
        <span className="mr-[3px]">Z:</span>
        <input defaultValue="35%" className="h-[21px] w-[45px] border border-[#acacac] bg-white pl-[9px] outline-none" />
      </label>
      <Steppers />
    </footer>
  );
}

export default function App() {
  return (
    <div className="flex h-screen flex-col overflow-hidden bg-white font-['Open_Sans','Noto_Sans',sans-serif] text-[11px] leading-4 text-black">
      <TitleBar />
      <MenuBar />
      <SelectorBar />

      <main className="flex min-h-0 flex-1">
        <nav className="flex w-[34px] shrink-0 flex-col items-center pt-[2px]">
          {toolbox.map(({ label, icon: Icon, active }) => (
            <button
              key={label}
              type="button"
              aria-label={label}
              className={`mb-px flex h-[29px] w-[30px] items-center justify-center ${active ? 'border border-[#99d1ff] bg-[#cce8ff]' : ''}`}
            >
              <Icon />
            </button>
          ))}
          <button type="button" className="mt-auto pb-[5px] text-sm text-[#6a6aa0]">»</button>
        </nav>
        <Workspace />
        <div className="w-[7px] shrink-0 bg-[#f0f0f0]" />
        <FillStrokeDock />
        <div className="flex w-[31px] shrink-0 flex-col items-center pt-[2px]">
          <Column items={commands} />
          <button type="button" className="mt-auto pb-[5px] text-sm text-[#6a6aa0]">»</button>
        </div>
        <div className="flex w-[30px] shrink-0 flex-col items-center pt-[2px]">
          <Column items={snaps} />
        </div>
      </main>

      <div className="flex h-[18px] shrink-0 border-t-2 border-[#222] bg-[#f0f0f0] pb-px pl-px">
        <div className="flex min-w-0 flex-1 overflow-hidden">
          <button type="button" aria-label="Ninguno" className="w-[15px] shrink-0 border-x border-black bg-white">
            <svg width="13" height="15" stroke="#8b1a1a" strokeWidth="1.300"><path d="M0 0l13 15M13 0L0 15" /></svg>
          </button>
          {palette.map((tone, i) => (
            <button key={i} type="button" aria-label={`Color ${i + 1}`} className={`w-[14px] shrink-0 ${tone}`} />
          ))}
        </div>
        <button type="button" aria-label="Opciones de paleta" className="flex w-[11px] shrink-0 justify-center pt-[1px]">
          <svg width="5" height="7"><path d="M5 0v7L0 3.500z" fill="#000" /></svg>
        </button>
      </div>
      <div className="flex h-[18px] shrink-0 items-center border-t-2 border-white bg-[#f0f0f0] pt-px">
        <button type="button" aria-label="Paleta anterior" className="flex w-[17px] justify-center text-[#aaa]"><Chevron rotate={90} /></button>
        <div className="h-[15px] w-[295px] bg-[#cdcdcd]" />
        <button type="button" aria-label="Paleta siguiente" className="ml-auto mr-[12px] text-[#555]"><Chevron rotate={-90} /></button>
      </div>

      <StatusBar />
      <div className="h-[3px] shrink-0 bg-[#15160f]" />
    </div>
  );
}
